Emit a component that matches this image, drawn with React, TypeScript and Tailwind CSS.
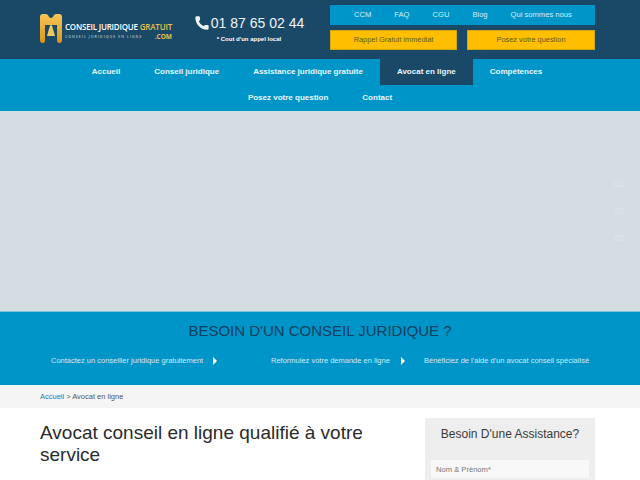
import { Phone } from "lucide-react";

const topLinks = ["CCM", "FAQ", "CGU", "Blog", "Qui sommes nous"];
const navRows = [
  ["Accueil", "Conseil juridique", "Assistance juridique gratuite", "Avocat en ligne", "Compétences"],
  ["Posez votre question", "Contact"],
];
const steps = [
  "Contactez un conseiller juridique gratuitement",
  "Reformulez votre demande en ligne",
  "Bénéficiez de l'aide d'un avocat conseil spécialisé",
];

function Logo() {
  return (
    <div className="flex items-center gap-[3px]">
      <svg width="22" height="29" viewBox="0 0 22 29">
        <defs>
          <linearGradient id="gold" x1="0" y1="0" x2="0" y2="1">
            <stop offset="0" stopColor="#f6c555" />
            <stop offset="1" stopColor="#dc9419" />
          </linearGradient>
        </defs>
        <path
          d="M3 0H6C7.500 0 8 1 8.500 2C9 3 10 4 11 4S13 3 13.500 2C14 1 14.500 0 16 0H19C21 0 22 1 22 3V26C22 28 21 29 19.500 29C17.500 29 17 28 17 26V11H5V26C5 28 4.500 29 2.500 29C1 29 0 28 0 26V3C0 1 1 0 3 0Z"
          fill="url(#gold)"
        />
        <path d="M11 10L12.500 13L15 22H7L9.500 13Z" fill="#f0c860" />
      </svg>
      <div className="mt-[5px] flex flex-col items-start font-['Open_Sans',sans-serif] leading-none">
        <div className="text-[8px] font-semibold text-white tracking-[-0.2px] whitespace-nowrap">
          CONSEIL JURIDIQUE <span className="text-[#e8c04a]">GRATUIT</span>
        </div>
        <div className="mt-[3px] flex w-[107px] items-center justify-between text-[3.5px] font-semibold text-[#b9c8d4] whitespace-nowrap">
          <span className="tracking-[1.05px]">CONSEIL JURIDIQUE EN LIGNE</span>
          <span className="text-[6.5px] font-bold leading-[5px] text-[#e8c04a]">.COM</span>
        </div>
      </div>
    </div>
  );
}

function Arrow() {
  return <span className="h-0 w-0 border-y-[4px] border-l-[4px] border-y-transparent border-l-white" />;
}

export default function App() {
  return (
    <div className="h-[480px] overflow-hidden bg-white font-['Liberation_Sans',sans-serif]">
      {/* Header */}
      <header className="h-[59px] bg-[#1a4867] pl-10 pr-[45px] flex">
        <div className="pt-[14px] w-[154px]">
          <Logo />
        </div>
        <div className="w-[110px] pt-[13px] flex flex-col items-center text-white">
          <div className="flex items-center text-[14px] leading-5 text-[#f0f4f7] whitespace-nowrap">
            <Phone size={16} fill="currentColor" strokeWidth={0} className="mr-[1px]" />
            <span>01 87 65 02 44</span>
          </div>
          <div className="text-[6px] font-bold leading-3 whitespace-nowrap">* Cout d'un appel local</div>
        </div>
        <div className="ml-auto pt-[5px] w-[265px] flex flex-col gap-[5px]">
          <div className="h-5 bg-[#0095c8] flex items-center pl-6 gap-[23px] text-[7.6px] text-[#d6eef7]">
            {topLinks.map((link) => (
              <a key={link}>{link}</a>
            ))}
          </div>
          <div className="flex gap-[10px]">
            <a className="h-5 w-[127px] bg-[#ffbe00] border border-[#d6a60e] flex items-center justify-center text-[7.4px] text-[#5c5a2c]">
              Rappel Gratuit immédiat
            </a>
            <a className="h-5 w-[128px] bg-[#ffbe00] border border-[#d6a60e] flex items-center justify-center text-[7.4px] text-[#5c5a2c]">
              Posez votre question
            </a>
          </div>
        </div>
      </header>

      {/* Main nav */}
      <nav className="h-[52px] bg-[#0095c8]">
        {navRows.map((row, i) => (
          <ul key={i} className={`flex h-[26px] justify-center ${i === 0 ? "pr-[6px]" : ""}`}>
            {row.map((item) => (
              <li
                key={item}
                className={`flex items-center px-[17px] text-[8px] font-bold text-[#e8f6fb] ${
                  item === "Avocat en ligne" ? "bg-[#1a4867]" : ""
                }`}
              >
                {item}
              </li>
            ))}
          </ul>
        ))}
      </nav>

      {/* Hero slider, image not loaded */}
      <section className="relative h-[200px] bg-[#d5dde3]">
        <div className="absolute right-4 top-[68px] flex flex-col gap-[16px] text-[9px] leading-[11px] text-[#dfe5ea]">
          <span>01</span>
          <span>02</span>
          <span>03</span>
        </div>
      </section>

      {/* Steps band */}
      <section className="h-[74px] bg-[#0095c8] border-t border-[#7cc4e0]">
        <h2 className="pt-[10px] text-center text-[15px] leading-[18px] text-[#12405f]">BESOIN D'UN CONSEIL JURIDIQUE ?</h2>
        <div className="mt-[16px] flex text-[7.5px] leading-[10px] text-[#cfeaf5]">
          <div className="ml-[51px] flex w-[220px] items-center gap-[10px]">
            <span>{steps[0]}</span>
            <Arrow />
          </div>
          <div className="flex w-[153px] items-center gap-[11px]">
            <span>{steps[1]}</span>
            <Arrow />
          </div>
          <span>{steps[2]}</span>
        </div>
      </section>

      {/* Breadcrumb */}
      <div className="h-[23px] bg-[#f5f5f5] pl-10 flex items-center text-[7.5px] text-[#555]">
        <a className="text-[#2a77b5]">Accueil</a>
        <span className="ml-[2px]">&gt; Avocat en ligne</span>
      </div>

      {/* Content */}
      <main className="flex pl-10 pr-[45px] pt-[10px]">
        <h1 className="w-[385px] text-[19px] leading-[22px] pt-[4px] text-[#292b2c]">
          Avocat conseil en ligne qualifié à votre service
        </h1>
        <aside className="h-[80px] ml-auto w-[170px] bg-[#eeeeee] px-[6px]">
          <h3 className="pt-[7px] text-center text-[12px] leading-[18px] text-[#3a3a3a]">Besoin D'une Assistance?</h3>
          <input
            placeholder="Nom & Prénom*"
            className="mt-[17px] h-[18px] w-full bg-[#f8f8f8] px-[5px] text-[7.6px] outline-none placeholder:text-[#777]"
          />
        </aside>
      </main>
    </div>
  );
}
